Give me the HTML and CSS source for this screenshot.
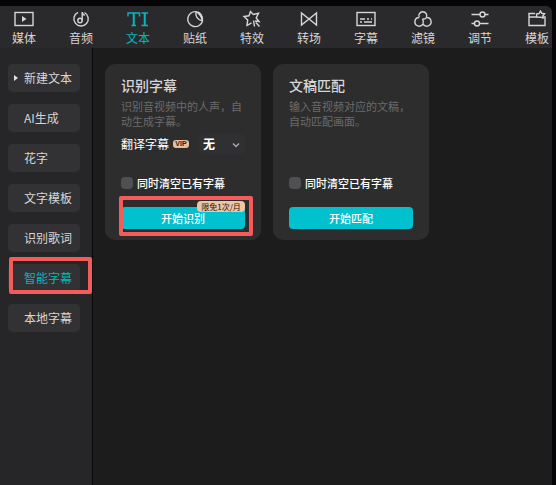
FILE: index.html
```html
<!DOCTYPE html>
<html lang="zh-CN">
<head>
<meta charset="utf-8">
<title>智能字幕</title>
<link rel="stylesheet" href="styles.css">
</head>
<body>
<div class="app">
  <nav class="toolbar">
    <button class="tool"><svg viewBox="0 0 20 20"><rect x="1" y="2.500" width="18" height="13"/><path class="solid" d="M8 6v6l4.500-3z"/></svg>媒体</button>
    <button class="tool"><svg viewBox="0 0 20 20"><path d="M7 2.300a7.200 7.200 0 1 0 6.500 0.200"/><circle cx="9" cy="10.500" r="2.200"/><path d="M11.200 10.500V2c0 2 1 2.700 2.600 3.300"/></svg>音频</button>
    <button class="tool active"><svg class="wide" viewBox="0 0 22 20"><path d="M1 6.500V3h11.500v3.500M4.500 15.500h4.500M14.500 3h6.500M14.500 15.500h6.500"/><path class="stem" d="M6.750 3v12.500M17.750 3v12.500"/></svg>文本</button>
    <button class="tool"><svg viewBox="0 0 20 20"><path d="M11 1.700A7.500 7.500 0 1 0 17.500 11C16.500 6.500 14.500 3.500 11 1.700zM11 1.700c-.8 4.300 1.500 8.300 6.500 9.300M12.500 2c2.800.8 5 4 5 7.500"/></svg>贴纸</button>
    <button class="tool"><svg viewBox="0 0 20 20"><path d="M9.500 12.800L5 15.500l.7-5.500L2 6.500l5-.7L8.500 1.500l2.800 3 5.200-1.300-2.300 4.800 2.800 3.500-4-.5M11.500 10.500l1 6M13.800 12.500l3.700 4"/></svg>特效</button>
    <button class="tool"><svg viewBox="0 0 20 20"><path d="M2.500 3v12L17.500 3v12z"/></svg>转场</button>
    <button class="tool"><svg viewBox="0 0 20 20"><rect x="1" y="2.500" width="18" height="13"/><path d="M4 9h5M11 9h2M15 9h1M4 12h2M8 12h8"/></svg>字幕</button>
    <button class="tool"><svg viewBox="0 0 20 20"><path d="M6.200 7.500a4 4 0 1 1 7.200 0C12.500 9 11 9.300 9.500 8.800M6.200 7.500a4.300 4.300 0 1 0 3.800 6.300c.8-1.700.4-3.200-.7-4.500M13.500 7.500a4.300 4.300 0 1 1-3.500 6.300"/></svg>滤镜</button>
    <button class="tool"><svg viewBox="0 0 20 20"><circle cx="12.500" cy="4.500" r="2.500"/><circle cx="7" cy="13.500" r="2.500"/><path d="M1.500 4.500H10M15 4.500h3.500M1.500 13.500h3M9.500 13.500h9"/></svg>调节</button>
    <button class="tool"><svg viewBox="0 0 20 20"><path d="M8 3.500H2V15.500h16V7h-2.500M2 7h8"/><path d="M9.800 7l-.3-3 2.500-.5 1.500-2.500 1.200 2.300 2.800.5-1.700 2.200.2 2-2.500-.8z"/></svg>模板</button>
  </nav>
  <div class="workspace">
    <nav class="sidebar">
      <button class="entry expandable">新建文本</button>
      <button class="entry">AI生成</button>
      <button class="entry">花字</button>
      <button class="entry">文字模板</button>
      <button class="entry">识别歌词</button>
      <button class="entry current">智能字幕</button>
      <button class="entry">本地字幕</button>
    </nav>
    <main class="panel">
      <section class="card">
        <h2>识别字幕</h2>
        <p>识别音视频中的人声，自动生成字幕。</p>
        <div class="translate">
          <label for="language">翻译字幕</label>
          <span class="vip">VIP</span>
          <span class="picker">
            <select id="language"><option>无</option></select>
            <svg viewBox="0 0 8 8"><path d="M1 2.500l3 3 3-3"/></svg>
          </span>
        </div>
        <label class="clear"><input type="checkbox">同时清空已有字幕</label>
        <div class="action marked">
          <button class="start">开始识别</button>
          <span class="quota">限免1次/月</span>
        </div>
      </section>
      <section class="card">
        <h2>文稿匹配</h2>
        <p>输入音视频对应的文稿，自动匹配画面。</p>
        <label class="clear"><input type="checkbox">同时清空已有字幕</label>
        <div class="action">
          <button class="start">开始匹配</button>
        </div>
      </section>
    </main>
  </div>
</div>
</body>
</html>
```
FILE: styles.css
```css
* {
  box-sizing: border-box;
}

body {
  margin: 0;
  background: #050507;
  color: #d6d6d8;
  font: 12px/16px "Noto Sans CJK SC", sans-serif;
}

button,
select {
  padding: 0;
  border: 0;
  background: none;
  color: inherit;
  font: inherit;
}

svg {
  fill: none;
  stroke: currentColor;
  stroke-width: 1.4;
}

.app {
  display: flex;
  flex-direction: column;
  min-height: 100vh;
  padding: 6px 4px 0 0;
}

.toolbar {
  display: flex;
  justify-content: space-between;
  height: 42px;
  padding: 4px 3px 0 12px;
  border-radius: 0 6px 0 0;
  background: #2a2a2d;
}

.tool {
  display: flex;
  flex-direction: column;
  align-items: center;
  width: 24px;
  white-space: nowrap;
}

.tool svg {
  width: 20px;
  height: 20px;
  flex: none;
}

.tool .wide {
  width: 22px;
}

.stem {
  stroke-width: 2;
}

.solid {
  fill: currentColor;
  stroke: none;
}

.active,
.entry.current {
  color: #00b8bd;
}

.workspace {
  display: flex;
  flex: 1;
}

.sidebar {
  display: flex;
  flex-direction: column;
  gap: 12px;
  width: 93px;
  padding: 16px 12px 16px 8px;
  border-right: 1px solid #080808;
  background: #262628;
}

.entry {
  position: relative;
  height: 28px;
  padding-left: 16px;
  border-radius: 5px;
  background: #323235;
  text-align: left;
  white-space: nowrap;
}

.expandable::before {
  content: "";
  position: absolute;
  top: 11px;
  left: 6px;
  border: 3px solid transparent;
  border-left: 4px solid #e0e0e0;
  border-right: 0;
}

.current::after,
.marked::after {
  content: "";
  position: absolute;
  border: 4px solid #f45b5b;
  border-radius: 2px;
  pointer-events: none;
}

.current::after {
  inset: -7px -12px -2px 1px;
}

.panel {
  display: flex;
  flex: 1;
  align-items: flex-start;
  gap: 12px;
  padding: 16px 12px;
  background: #1c1c1c;
}

.card {
  display: flex;
  flex-direction: column;
  width: 156px;
  height: 176px;
  padding: 11px 16px;
  border-radius: 10px;
  background: #2d2d2d;
}

h2 {
  margin: 0 0 4px;
  font-size: 14px;
  font-weight: 500;
  line-height: 20px;
}

p {
  margin: 0;
  color: #6b6b6b;
  font-size: 11px;
  line-height: 15px;
}

.translate {
  display: flex;
  align-items: center;
  height: 22px;
  margin-top: 4px;
  color: #fff;
}

.vip {
  width: 16px;
  margin-left: 4px;
  border-radius: 3px;
  background: #e8bd9c;
  color: #2b1a10;
  font: 700 7px/8px "Liberation Sans", sans-serif;
  text-align: center;
}

.picker {
  display: flex;
  position: relative;
  flex: 1;
  margin-left: 9px;
  border-radius: 4px;
  background: #303032;
}

.picker select {
  width: 100%;
  height: 20px;
  padding-left: 5px;
  appearance: none;
  font-weight: 700;
}

.picker svg {
  position: absolute;
  top: 7px;
  right: 5px;
  width: 8px;
  height: 8px;
  color: #aaa;
  pointer-events: none;
}

.clear {
  display: flex;
  align-items: center;
  gap: 4px;
  margin-top: auto;
  color: #fff;
  font-size: 11px;
  font-weight: 500;
  white-space: nowrap;
}

.clear input {
  width: 12px;
  height: 12px;
  margin: 0;
  border-radius: 4px;
  appearance: none;
  background: #505053;
}

.action {
  position: relative;
  margin-top: 16px;
}

.start {
  display: block;
  width: 100%;
  height: 22px;
  border-radius: 4px;
  background: #00c1cd;
  color: #fff;
  font-size: 11px;
  font-weight: 500;
  line-height: 20px;
}

.quota {
  position: absolute;
  top: -6px;
  right: 0;
  width: 48px;
  border-radius: 4px;
  background: #edc4a4;
  color: #21150e;
  font-size: 8px;
  line-height: 11px;
  text-align: center;
  white-space: nowrap;
}

.marked::after {
  inset: -11px -8px -7px -2px;
}
```
